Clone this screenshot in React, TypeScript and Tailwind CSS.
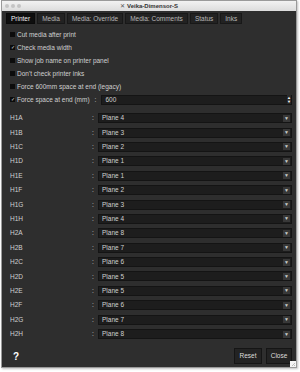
const TABS = ['Printer', 'Media', 'Media: Override', 'Media: Comments', 'Status', 'Inks'];

const CHECKS: { label: string; checked: boolean }[] = [
  { label: 'Cut media after print', checked: false },
  { label: 'Check media width', checked: true },
  { label: 'Show job name on printer panel', checked: false },
  { label: "Don't check printer inks", checked: false },
  { label: 'Force 600mm space at end (legacy)', checked: false },
];

const HEADS: [string, string][] = [
  ['H1A', 'Plane 4'],
  ['H1B', 'Plane 3'],
  ['H1C', 'Plane 2'],
  ['H1D', 'Plane 1'],
  ['H1E', 'Plane 1'],
  ['H1F', 'Plane 2'],
  ['H1G', 'Plane 3'],
  ['H1H', 'Plane 4'],
  ['H2A', 'Plane 8'],
  ['H2B', 'Plane 7'],
  ['H2C', 'Plane 6'],
  ['H2D', 'Plane 5'],
  ['H2E', 'Plane 5'],
  ['H2F', 'Plane 6'],
  ['H2G', 'Plane 7'],
  ['H2H', 'Plane 8'],
];

function Check({ checked }: { checked: boolean }) {
  return (
    <span className="flex h-[5px] w-[5px] flex-none items-center justify-center bg-[#0c0c0c] text-[5px] leading-none text-[#ddd]">
      {checked ? '✓' : ''}
    </span>
  );
}

function Select({ value }: { value: string }) {
  return (
    <div className="flex h-[10px] flex-1 items-center border border-[#141414] bg-[#1d1d1d] pl-[3px] pr-[1px]">
      <span className="flex-1">{value}</span>
      <span className="flex h-[7px] w-[7px] items-center justify-center bg-[#383838] text-[5px] leading-none text-[#ccc]">
        ▼
      </span>
    </div>
  );
}

export default function App() {
  return (
    <div
      className="h-[372px] w-[300px] overflow-hidden bg-white pl-[1px] text-[6.5px] text-[#d0d0d0]"
      style={{ fontFamily: '"Liberation Sans", Arial, sans-serif' }}
    >
      <div className="relative flex h-[368px] w-[296px] flex-col border border-[#9a9a9a] shadow-[1px_1px_2px_rgba(0,0,0,0.25)]">
        {/* title bar */}
        <div className="relative flex h-[10px] flex-none items-center bg-gradient-to-b from-[#f2f2f2] to-[#dcdcdc] pl-[3px]">
          <div className="flex gap-[2px]">
            <span className="h-[4px] w-[4px] rounded-full bg-[#c4c4c4]" />
            <span className="h-[4px] w-[4px] rounded-full bg-[#c4c4c4]" />
            <span className="h-[4px] w-[4px] rounded-full bg-[#c4c4c4]" />
          </div>
          <div className="absolute inset-0 flex items-center justify-center gap-[2px] text-[6px] font-bold text-[#333]">
            <span className="text-[6px] font-normal text-[#555]">✕</span>
            Veika-Dimensor-S
          </div>
        </div>

        <div className="flex flex-1 flex-col bg-[#2e2e2e] px-[3px] pb-[3px]">
          {/* tabs */}
          <div className="mt-[2px] flex gap-[2px] pl-[1px]">
            {TABS.map((t, i) => (
              <div
                key={t}
                className={`flex h-[11px] items-center border px-[4px] ${
                  i === 0 ? 'border-[#0a0a0a] bg-[#0e0e0e] text-[#f0f0f0]' : 'border-[#181818] bg-[#222] text-[#b8b8b8]'
                }`}
              >
                {t}
              </div>
            ))}
          </div>

          {/* checkboxes */}
          <div className="mt-[4px] flex flex-col pl-[5px]">
            {CHECKS.map((c) => (
              <div key={c.label} className="flex h-[13px] items-center gap-[2px]">
                <Check checked={c.checked} />
                <span>{c.label}</span>
              </div>
            ))}
            <div className="flex h-[13px] items-center gap-[2px] pr-[1px]">
              <Check checked />
              <span>Force space at end (mm)</span>
              <span className="ml-[3px] mr-[3px]">:</span>
              <div className="flex h-[10px] flex-1 items-center border border-[#141414] bg-[#1d1d1d] pl-[3px]">
                <span className="flex-1">600</span>
                <span className="flex h-[9px] w-[4px] flex-col items-center justify-center bg-[#2a2a2a] text-[4px] leading-[4px] text-white">
                  <span>▲</span>
                  <span>▼</span>
                </span>
              </div>
            </div>
          </div>

          {/* head mapping */}
          <div className="mt-[5px] flex flex-col pl-[5px] pr-[1px]">
            {HEADS.map(([h, p]) => (
              <div key={h} className="flex h-[14.4px] items-center">
                <span className="w-[82px]">{h}</span>
                <span className="w-[6px]">:</span>
                <Select value={p} />
              </div>
            ))}
          </div>

          {/* footer */}
          <div className="mt-auto flex items-center justify-between pl-[8px] pr-[1px]">
            <span className="text-[10px] font-bold text-white">?</span>
            <div className="flex gap-[4px]">
              <button className="h-[16px] w-[28px] border border-[#151515] bg-[#232323] text-[6.5px] text-[#ddd]">
                Reset
              </button>
              <button className="h-[16px] w-[26px] border border-[#151515] bg-[#232323] text-[6.5px] text-[#ddd]">
                Close
              </button>
            </div>
          </div>
        </div>

        {/* resize grip */}
        <svg className="absolute bottom-0 right-0" width="6" height="6" viewBox="0 0 6 6">
          <rect width="6" height="6" fill="#f4f4f4" />
          <path d="M5 2 L2 5 M5 4 L4 5" stroke="#999" strokeWidth="0.6" />
        </svg>
      </div>
    </div>
  );
}
